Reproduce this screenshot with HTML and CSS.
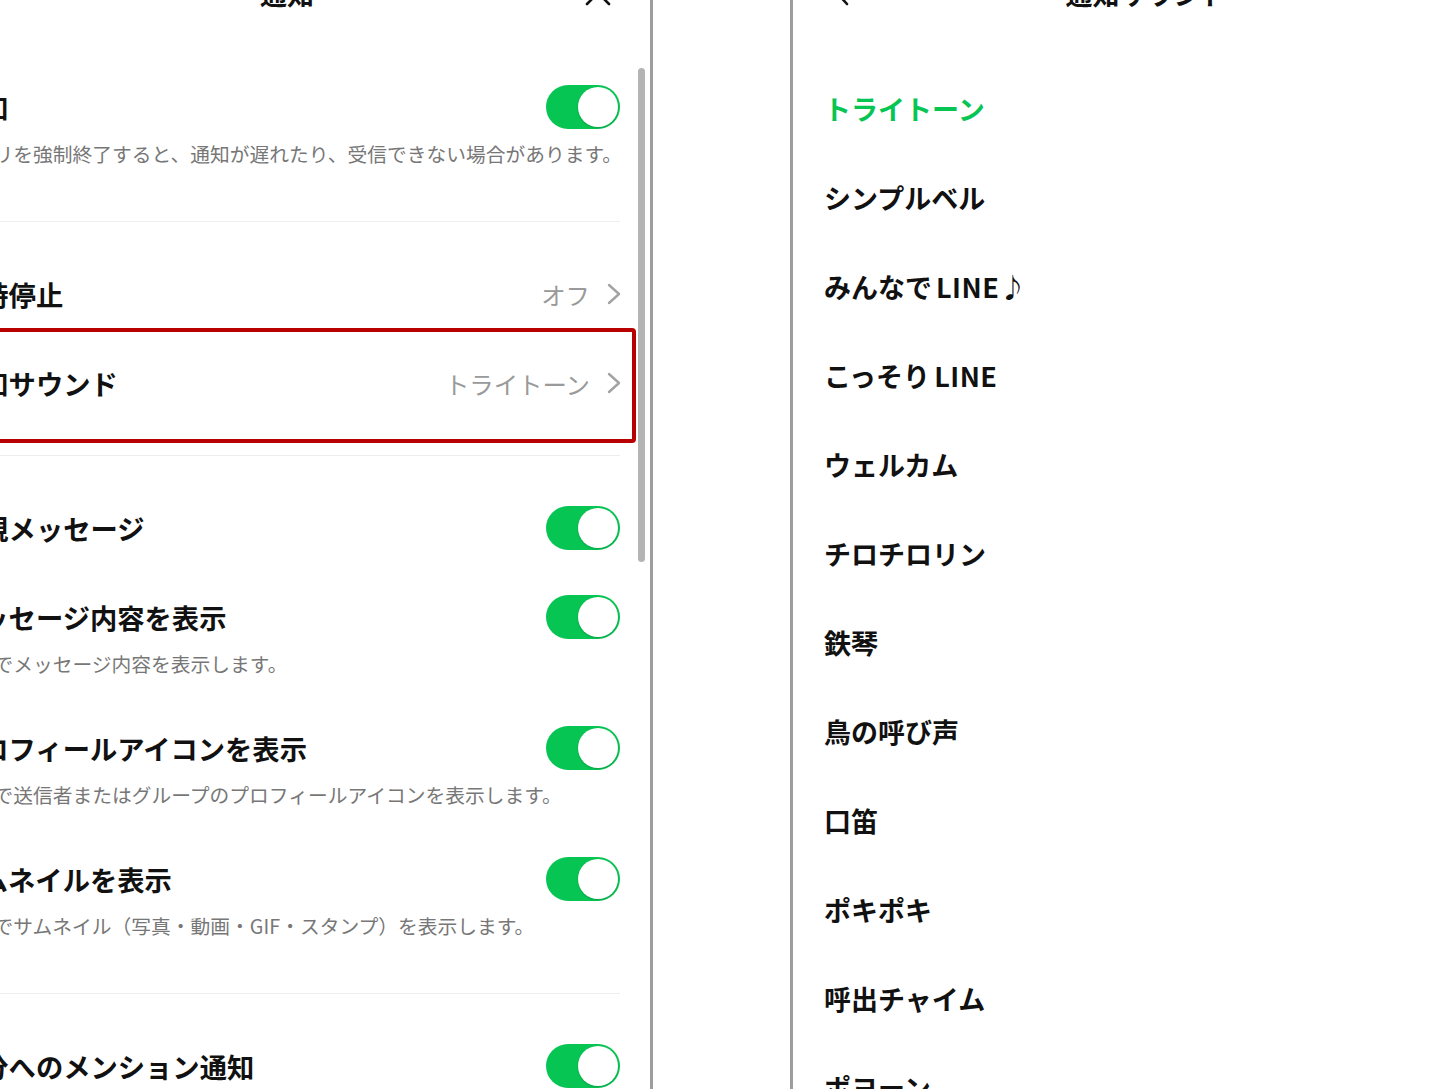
FILE: index.html
```
<!DOCTYPE html>
<html lang="ja">
<head>
	<meta charset="UTF-8">
	<title>通知</title>
	<link rel="stylesheet" href="styles.css">
</head>
<body>
	<div class="screens">
		<!-- 通知設定 -->
		<section class="pane pane-settings">
			<header class="pane-head">
				<span></span>
				<h1 class="pane-title">通知</h1>
				<span class="head-btn head-close">
					<svg width="28" height="28" viewBox="0 0 28 28"><path d="M3 3L25 25M25 3L3 25" stroke="#111" stroke-width="2.6" stroke-linecap="round" fill="none"/></svg>
				</span>
			</header>
			<div class="scroll-thumb"></div>

			<div class="group">
				<div class="row">
					<div class="row-main">
						<span class="label">通知</span>
						<span class="toggle on"></span>
					</div>
					<p class="desc">アプリを強制終了すると、通知が遅れたり、受信できない場合があります。</p>
				</div>
			</div>

			<div class="group">
				<div class="row">
					<div class="row-main">
						<span class="label">一時停止</span>
						<span class="value">オフ</span>
						<svg class="chev" width="14" height="24" viewBox="0 0 14 24"><path d="M2 3L12 12L2 21" stroke="#a3a3a3" stroke-width="2.4" stroke-linecap="round" stroke-linejoin="round" fill="none"/></svg>
					</div>
				</div>
				<div class="row marked">
					<div class="row-main">
						<span class="label">通知サウンド</span>
						<span class="value">トライトーン</span>
						<svg class="chev" width="14" height="24" viewBox="0 0 14 24"><path d="M2 3L12 12L2 21" stroke="#a3a3a3" stroke-width="2.4" stroke-linecap="round" stroke-linejoin="round" fill="none"/></svg>
					</div>
				</div>
			</div>

			<div class="group">
				<div class="row">
					<div class="row-main">
						<span class="label">新規メッセージ</span>
						<span class="toggle on"></span>
					</div>
				</div>
				<div class="row">
					<div class="row-main">
						<span class="label">メッセージ内容を表示</span>
						<span class="toggle on"></span>
					</div>
					<p class="desc">通知でメッセージ内容を表示します。</p>
				</div>
				<div class="row">
					<div class="row-main">
						<span class="label">プロフィールアイコンを表示</span>
						<span class="toggle on"></span>
					</div>
					<p class="desc">通知で送信者またはグループのプロフィールアイコンを表示します。</p>
				</div>
				<div class="row">
					<div class="row-main">
						<span class="label">サムネイルを表示</span>
						<span class="toggle on"></span>
					</div>
					<p class="desc">通知でサムネイル（写真・動画・GIF・スタンプ）を表示します。</p>
				</div>
			</div>

			<div class="group">
				<div class="row">
					<div class="row-main">
						<span class="label">自分へのメンション通知</span>
						<span class="toggle on"></span>
					</div>
				</div>
			</div>
		</section>

		<div class="pane-gap"></div>

		<!-- 通知サウンド一覧 -->
		<section class="pane pane-sounds">
			<header class="pane-head">
				<span class="head-btn head-back">
					<svg width="16" height="28" viewBox="0 0 16 28"><path d="M13 3L3 14L13 25" stroke="#111" stroke-width="2.6" stroke-linecap="round" stroke-linejoin="round" fill="none"/></svg>
				</span>
				<h1 class="pane-title">通知サウンド</h1>
				<span></span>
			</header>
			<ul class="sound-list">
				<li class="selected">トライトーン</li>
				<li>シンプルベル</li>
				<li>みんなで<span class="latin">LINE</span>♪</li>
				<li>こっそり<span class="latin">LINE</span></li>
				<li>ウェルカム</li>
				<li>チロチロリン</li>
				<li>鉄琴</li>
				<li>鳥の呼び声</li>
				<li>口笛</li>
				<li>ポキポキ</li>
				<li>呼出チャイム</li>
				<li>ポヨーン</li>
			</ul>
		</section>
	</div>
</body>
</html>
```

FILE: styles.css
```
* {
	box-sizing: border-box;
}

body {
	margin: 0;
	background: #fff;
	overflow: hidden;
	height: 1089px;
	font-family: "Noto Sans CJK JP", "Noto Sans", sans-serif;
	color: #111;
}

.screens {
	display: flex;
	align-items: flex-start;
	height: 1089px;
}

.pane {
	position: relative;
	flex: none;
	height: 1200px;
}

/* 左：通知設定 */
.pane-settings {
	width: 729px;
	margin-left: -76px;
	padding: 0 30px;
	border-right: 3px solid #9d9d9d;
}

.pane-gap {
	flex: none;
	width: 137px;
}

/* 右：サウンド一覧 */
.pane-sounds {
	width: 710px;
	padding: 0 31px;
	border-left: 3px solid #9d9d9d;
}

.pane-head {
	display: grid;
	grid-template-columns: 1fr auto 1fr;
	align-items: center;
	height: 84px;
	margin-top: -49px;
}

.pane-title {
	margin: 0;
	font-size: 27px;
	font-weight: 700;
	line-height: 1;
}

.head-btn {
	display: flex;
	align-items: center;
}

.head-close {
	justify-self: end;
	margin-right: 8px;
}

.head-back {
	margin-left: 10px;
}

.scroll-thumb {
	position: absolute;
	top: 68px;
	right: 5px;
	width: 7px;
	height: 494px;
	border-radius: 4px;
	background: #b4b4b4;
}

.group {
	padding: 27.5px 0;
	border-bottom: 1px solid #eeeeee;
}

.group:last-child {
	border-bottom: none;
}

.row {
	position: relative;
	padding: 22.5px 0;
}

.row-main {
	display: flex;
	align-items: center;
	height: 44px;
}

.label {
	font-size: 27.3px;
	font-weight: 700;
	white-space: nowrap;
	margin-right: auto;
}

.desc {
	margin: 8px 0 0;
	font-size: 19.75px;
	line-height: 34px;
	color: #777;
	white-space: nowrap;
}

.value {
	font-size: 24.4px;
	color: #9a9a9a;
	margin-right: 17px;
}

.chev {
	margin-right: -1px;
}

/* 選択中の行の赤枠 */
.marked::after {
	content: "";
	position: absolute;
	left: -90px;
	right: -16px;
	top: -10.5px;
	bottom: -15.5px;
	border: 4px solid #b80000;
	border-radius: 4px;
}

.toggle {
	position: relative;
	width: 74px;
	height: 44px;
	border-radius: 22px;
	background: #e5e5e5;
}

.toggle.on {
	background: #07c553;
}

.toggle::after {
	content: "";
	position: absolute;
	top: 2px;
	left: 2px;
	width: 40px;
	height: 40px;
	border-radius: 50%;
	background: #fff;
	box-shadow: 0 1px 2px rgba(0, 0, 0, 0.18);
}

.toggle.on::after {
	left: 32px;
}

.sound-list {
	list-style: none;
	margin: 0;
	padding: 28.5px 0 0;
}

.sound-list li {
	display: flex;
	align-items: center;
	height: 89px;
	font-size: 27px;
	font-weight: 700;
}

.sound-list li.selected {
	color: #07c553;
}

.sound-list .latin {
	margin-left: 4px;
	letter-spacing: 0.5px;
}
```
